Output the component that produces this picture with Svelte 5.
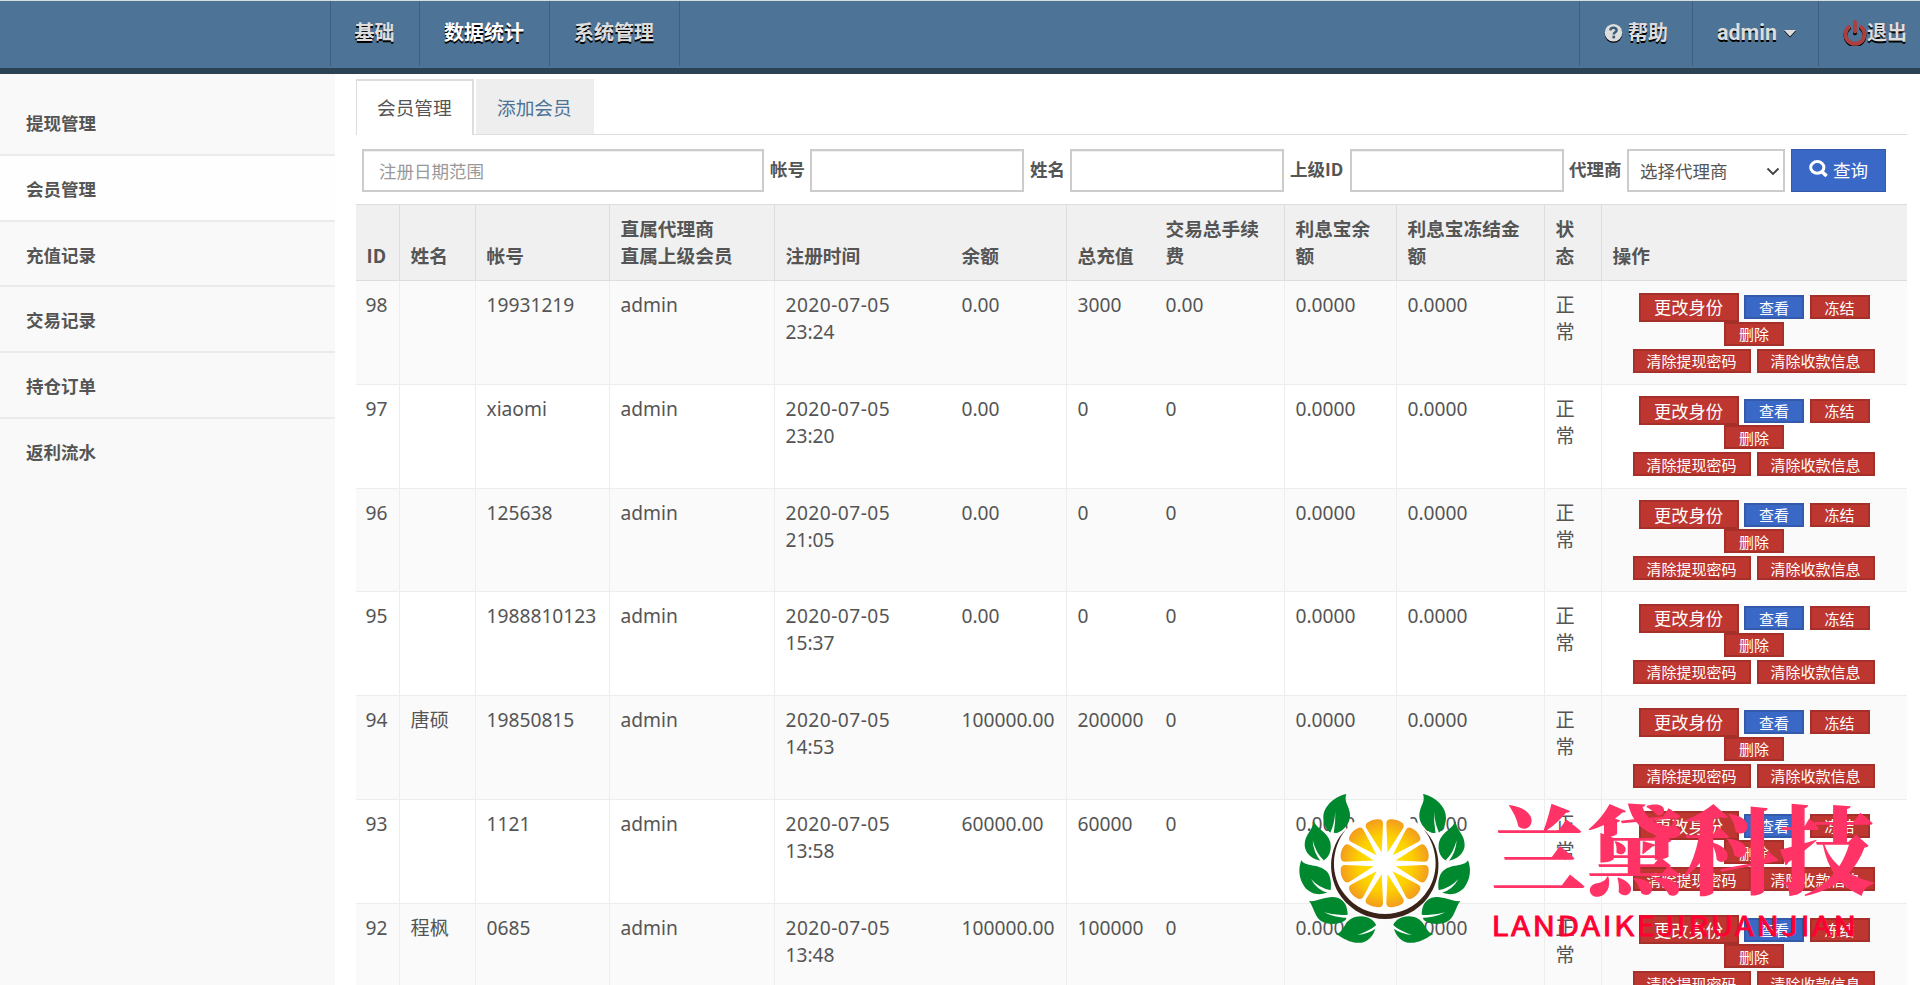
<script>
  const nav = [
    { label: '基础', w: 89 },
    { label: '数据统计', w: 130, active: true },
    { label: '系统管理', w: 130 }
  ];
  const side = ['提现管理', '会员管理', '充值记录', '交易记录', '持仓订单', '返利流水'];
  const heads = [
    ['ID'], ['姓名'], ['帐号'], ['直属代理商', '直属上级会员'], ['注册时间'], ['余额'],
    ['总充值'], ['交易总手续', '费'], ['利息宝余', '额'], ['利息宝冻结金', '额'], ['状', '态'], ['操作']
  ];
  const noLine = [4, 6, 11];
  const rows = [
    ['98', '', '19931219', '23:24', '0.00', '3000', '0.00'],
    ['97', '', 'xiaomi', '23:20', '0.00', '0', '0'],
    ['96', '', '125638', '21:05', '0.00', '0', '0'],
    ['95', '', '1988810123', '15:37', '0.00', '0', '0'],
    ['94', '唐硕', '19850815', '14:53', '100000.00', '200000', '0'],
    ['93', '', '1121', '13:58', '60000.00', '60000', '0'],
    ['92', '程枫', '0685', '13:48', '100000.00', '100000', '0']
  ].map(([id, name, acc, time, bal, total, fee]) => [
    [id], [name], [acc], ['admin'], ['2020-07-05', time], [bal], [total], [fee], ['0.0000'], ['0.0000'], ['正', '常']
  ]);
  const slices = Array.from({ length: 12 }, (_, i) => 15 + i * 30);
</script>

<div class="page">
  <header>
    <nav>
      {#each nav as n}
        <a class:active={n.active} style="width:{n.w}px">{n.label}</a>
      {/each}
    </nav>
    <div class="user">
      <a class="help">
        <svg width="19" height="20" viewBox="0 0 19 20"><circle cx="9.5" cy="11" r="8.8" fill="#000" /><circle cx="9.5" cy="9.7" r="8.8" fill="#ddd" /><path d="M6.3 7.4C6.5 3.8 12.9 3.9 12.6 7.4C12.4 9.4 9.7 9.3 9.7 11.6" fill="none" stroke="#3d5c79" stroke-width="2.5" /><rect x="8.4" y="12.7" width="2.7" height="2.7" fill="#3d5c79" /></svg>
        <span>帮助</span>
      </a>
      <a class="admin">
        <span>admin</span>
        <svg width="12" height="9" viewBox="0 0 12 9"><path d="M0 2H12L6 8.5Z" fill="#000" /><path d="M0 1H12L6 7.5Z" fill="#ddd" /></svg>
      </a>
      <a class="exit">
        <svg width="24" height="27" viewBox="0 0 24 27"><g fill="none" stroke-linecap="round" stroke-width="4"><path d="M6 8A9.5 9.5 0 1 0 18 8M12 4V13" stroke="#000" transform="translate(0 1.3)" /><path d="M6 8A9.5 9.5 0 1 0 18 8M12 3V12.5" stroke="#ab4040" /></g></svg>
        <span>退出</span>
      </a>
    </div>
  </header>

  <div class="body">
    <aside>
      {#each side as s, i}
        <a class:on={i === 1}>{s}</a>
      {/each}
    </aside>
    <main>
      <div class="tabs">
        <a class="tab current">会员管理</a>
        <a class="tab">添加会员</a>
      </div>
      <form class="filters">
        <input class="range" placeholder="注册日期范围" />
        <label class="l1" for="acc">帐号</label>
        <input id="acc" />
        <label class="l2" for="nm">姓名</label>
        <input id="nm" />
        <label class="l3" for="pid">上级ID</label>
        <input id="pid" />
        <label class="l4" for="agent">代理商</label>
        <div class="pick">
          <select id="agent"><option>选择代理商</option></select>
          <svg width="14" height="9" viewBox="0 0 14 9"><path d="M1.5 1.5L7 7L12.5 1.5" fill="none" stroke="#444" stroke-width="1.9" /></svg>
        </div>
        <button type="button" class="search">
          <svg width="20" height="18" viewBox="0 0 20 18"><ellipse cx="8.3" cy="7.4" rx="6.6" ry="5.8" fill="none" stroke="#fff" stroke-width="3" /><path d="M12.8 11.6L17.6 16" stroke="#fff" stroke-width="3.6" /></svg>
          <span>查询</span>
        </button>
      </form>

      <div class="table">
        <div class="row head">
          {#each heads as h, i}
            <div class="cell" class:plain={noLine.includes(i)}>{#each h as t}<div>{t}</div>{/each}</div>
          {/each}
        </div>
        {#each rows as r, n}
          <div class="row" class:odd={n % 2 === 0}>
            {#each r as c, i}
              <div class="cell" class:date={i === 4} class:plain={noLine.includes(i)}>{#each c as t}<div>{t}</div>{/each}</div>
            {/each}
            <div class="ops">
              <div class="line first"><button class="big">更改身份</button><button class="blue">查看</button><button>冻结</button></div>
              <div class="line second"><button>删除</button></div>
              <div class="line third"><button class="wide">清除提现密码</button><button class="wide">清除收款信息</button></div>
            </div>
          </div>
        {/each}
      </div>
    </main>
  </div>

  <svg class="logo" viewBox="0 0 570 495" width="190" height="165">
    <defs>
      <radialGradient id="juice" gradientUnits="userSpaceOnUse" cx="0" cy="0" r="136">
        <stop offset="0.3" stop-color="#ffe000" /><stop offset="0.6" stop-color="#fdd000" /><stop offset="1" stop-color="#f39a20" />
      </radialGradient>
      <g id="leaves">
        <g fill="#00882f">
          <path d="M169 30C132 38 99 68 100 102C101 124 110 140 122 146L140 147C166 138 187 110 178 80C174 62 162 52 169 30Z" />
          <path d="M72 111C78 134 112 142 121 175C126 202 116 224 97 231C68 228 44 208 44 183C44 152 66 142 72 111Z" />
          <path d="M34 229C47 250 84 238 110 262C122 275 125 298 122 318L108 327C85 335 59 329 44 309C26 284 24 254 34 229Z" />
          <path d="M57 351C82 355 114 331 145 342C165 350 172 369 173 390L167 408C150 421 120 423 100 415C73 403 73 370 57 351Z" />
          <path d="M138 450C164 445 160 410 195 399C225 391 250 404 258 422C256 446 241 470 215 476C184 480 162 464 138 450Z" />
        </g>
        <g fill="#fff">
          <path d="M136 82Q137 115 131 149L121 146Q134 118 136 82Z" />
          <path d="M68 169Q78 208 101 229L93 233Q70 206 68 169Z" />
          <path d="M63 285Q86 312 123 319L116 328Q80 318 63 285Z" />
          <path d="M102 385Q138 396 176 392V402Q136 402 102 385Z" />
          <path d="M202 453Q241 439 260 422L259 433Q235 450 202 453Z" />
        </g>
      </g>
    </defs>
    <path d="M165 140A153 153 0 1 0 404 140A153 153 0 0 0 165 140" fill="#fff" />
    <path d="M168 136C110 192 112 283 154 339C219 427 350 427 415 339C457 283 459 192 401 136C447 194 450 278 404 332C343 409 226 409 165 332C119 278 122 194 168 136Z" fill="#3a2319" />
    <g transform="translate(284 238)">
      {#each slices as a}
        <path d="M0 -34L26 -116Q29 -128 17 -132Q0 -138 -17 -132Q-29 -128 -26 -116Z" transform="rotate({a})" fill="url(#juice)" />
      {/each}
    </g>
    <use href="#leaves" />
    <use href="#leaves" transform="translate(568 0) scale(-1 1)" />
  </svg>
  <svg class="brand" width="400" height="170" viewBox="0 0 400 170">
    <text class="cn" x="8.5" y="105.5">兰黛科技</text>
    <text class="en" x="9.5" y="156" textLength="367" lengthAdjust="spacingAndGlyphs">LANDAIKEJIRUANJIAN</text>
  </svg>
</div>

<style>
  :global(body) { margin: 0; overflow: hidden; background: #fff; }
  * { box-sizing: border-box; }
  .page { position: relative; width: 1920px; height: 985px; overflow: hidden; background: #fff; color: #555; font: 18.7px/27px "Noto Sans", "Noto Sans CJK SC", sans-serif; }
  header { height: 74px; display: flex; justify-content: space-between; background: #4d7396; border-top: 1px solid #d9dcdf; border-bottom: 6px solid #2b4154; font: bold 20px/52px "Noto Sans CJK SC", sans-serif; text-shadow: 0 1.5px 0 #000; color: #ddd; }
  nav { display: flex; margin-left: 329.5px; height: 65px; border-right: 1px solid #3e5f7e; }
  nav a { border-left: 1.5px solid #3e5f7e; text-align: center; padding-top: 5px; }
  nav a.active { color: #fff; }
  .user { display: flex; height: 65px; }
  .user a { display: flex; border-left: 1px solid #3e5f7e; padding-top: 5px; }
  .help { width: 113px; padding-left: 24px; gap: 5px; }
  .help svg { margin-top: 17px; }
  .admin { width: 126px; padding-left: 24px; gap: 7px; font-family: Roboto, sans-serif; font-size: 21.5px; line-height: 53px; }
  .admin svg { margin-top: 23px; }
  .exit { width: 102px; padding-left: 24px; }
  .exit svg { margin-top: 13px; }
  .body { display: flex; height: 911px; }
  aside { width: 335px; flex: none; background: #f9f9f9; padding-top: 16px; font: bold 17.5px/64px "Noto Sans CJK SC", sans-serif; }
  aside a { display: block; height: 65.8px; padding-left: 26px; border-bottom: 2px solid #ebebeb; padding-top: 1px; }
  aside a.on { background: #fefefe; }
  aside a:last-child { border: 0; }
  main { margin-left: 21px; width: 1551px; padding-top: 5px; }
  .tabs { display: flex; gap: 2px; height: 56px; border-bottom: 1px solid #ddd; }
  .tab { width: 118px; height: 55px; background: #eee; color: #4d7396; padding-left: 21px; line-height: 56px; font-family: "Noto Sans CJK SC", sans-serif; }
  .current { height: 56px; background: #fff; color: #555; border: 2px solid #ddd; border-left-width: 1px; border-bottom: 0; padding-left: 20px; line-height: 52px; }
  .filters { display: flex; height: 69px; padding: 14px 0 0 6px; font: 17.5px/39px "Noto Sans CJK SC", sans-serif; }
  input { width: 214px; height: 43px; border: 2px solid #ccc; background: #fff; padding: 0 0 0 15px; font: inherit; box-shadow: inset 0 1px 1px #eee; border-radius: 0; }
  input.range { width: 402px; }
  input::placeholder { color: #999; opacity: 1; }
  label { font-weight: bold; padding-left: 6px; white-space: nowrap; flex: none; }
  .l1, .l2 { width: 46px; }
  .l3 { width: 66px; }
  .l4 { width: 63px; padding-left: 5px; }
  .pick { position: relative; width: 158px; height: 43px; }
  .pick svg { position: absolute; right: 5px; top: 18px; }
  select { appearance: none; width: 158px; height: 43px; border: 2px solid #ccc; border-radius: 0; background: #fff; color: #555; font: inherit; padding: 0 0 0 11px; }
  .search { display: flex; width: 95px; height: 43px; margin-left: 6px; padding: 0 0 0 17px; gap: 4px; font: inherit; line-height: 39px; color: #fff; background: #3a68c7; border: 1.5px solid #335ba9; }
  .search svg { margin-top: 10px; }
  .row { display: grid; grid-template-columns: 44px 76px 134px 165px 176px 116px 88px 130px 112px 148px 57px 305px; height: 103.8px; border-bottom: 1px solid #ededed; font-size: 19.2px; }
  .odd { background: #fafafa; }
  .head { height: 77px; background: #f0f0f0; border-top: 1px solid #ddd; border-bottom: 1px solid #ddd; font: bold 18.7px/27px "Noto Sans CJK SC", sans-serif; }
  .cell { border-right: 1px solid #ededed; padding: 10px 0 0 10.5px; white-space: nowrap; }
  .cell:first-child { padding-left: 9.5px; }
  .date div:first-child { letter-spacing: .45px; }
  .head .cell { border-color: #ddd; display: flex; flex-direction: column; justify-content: flex-end; padding: 0 0 12px 10.5px; }
  .cell.plain { border-right: 0; }
  .ops { padding: 11.5px 1px 0 0; }
  .line { display: flex; justify-content: center; align-items: center; }
  .line button { width: 60px; height: 24px; padding: 0; border: 2px solid #a5302a; background: #bd362f; color: #fff; font: 15px/19px "Noto Sans CJK SC", sans-serif; }
  .first { height: 29px; gap: 5.5px; }
  .first .big { width: 100px; height: 29px; font-size: 17.3px; line-height: 24px; }
  .line .blue { background: #3a68c7; border-color: #335ba9; }
  .second { height: 24px; }
  .third { height: 24px; margin-top: 3px; gap: 6px; padding-right: 1px; }
  .third .wide { width: 118px; }
  .logo { position: absolute; left: 1290px; top: 784px; }
  .brand { position: absolute; left: 1482px; top: 780px; }
  .cn { font: 900 96px "Noto Serif CJK SC", "Noto Sans CJK SC", serif; fill: #ff3366; }
  .en { font: 400 26.6px "Noto Sans CJK SC", sans-serif; letter-spacing: 2px; fill: #ff0033; stroke: #ff0033; stroke-width: 0.8; }
</style>
